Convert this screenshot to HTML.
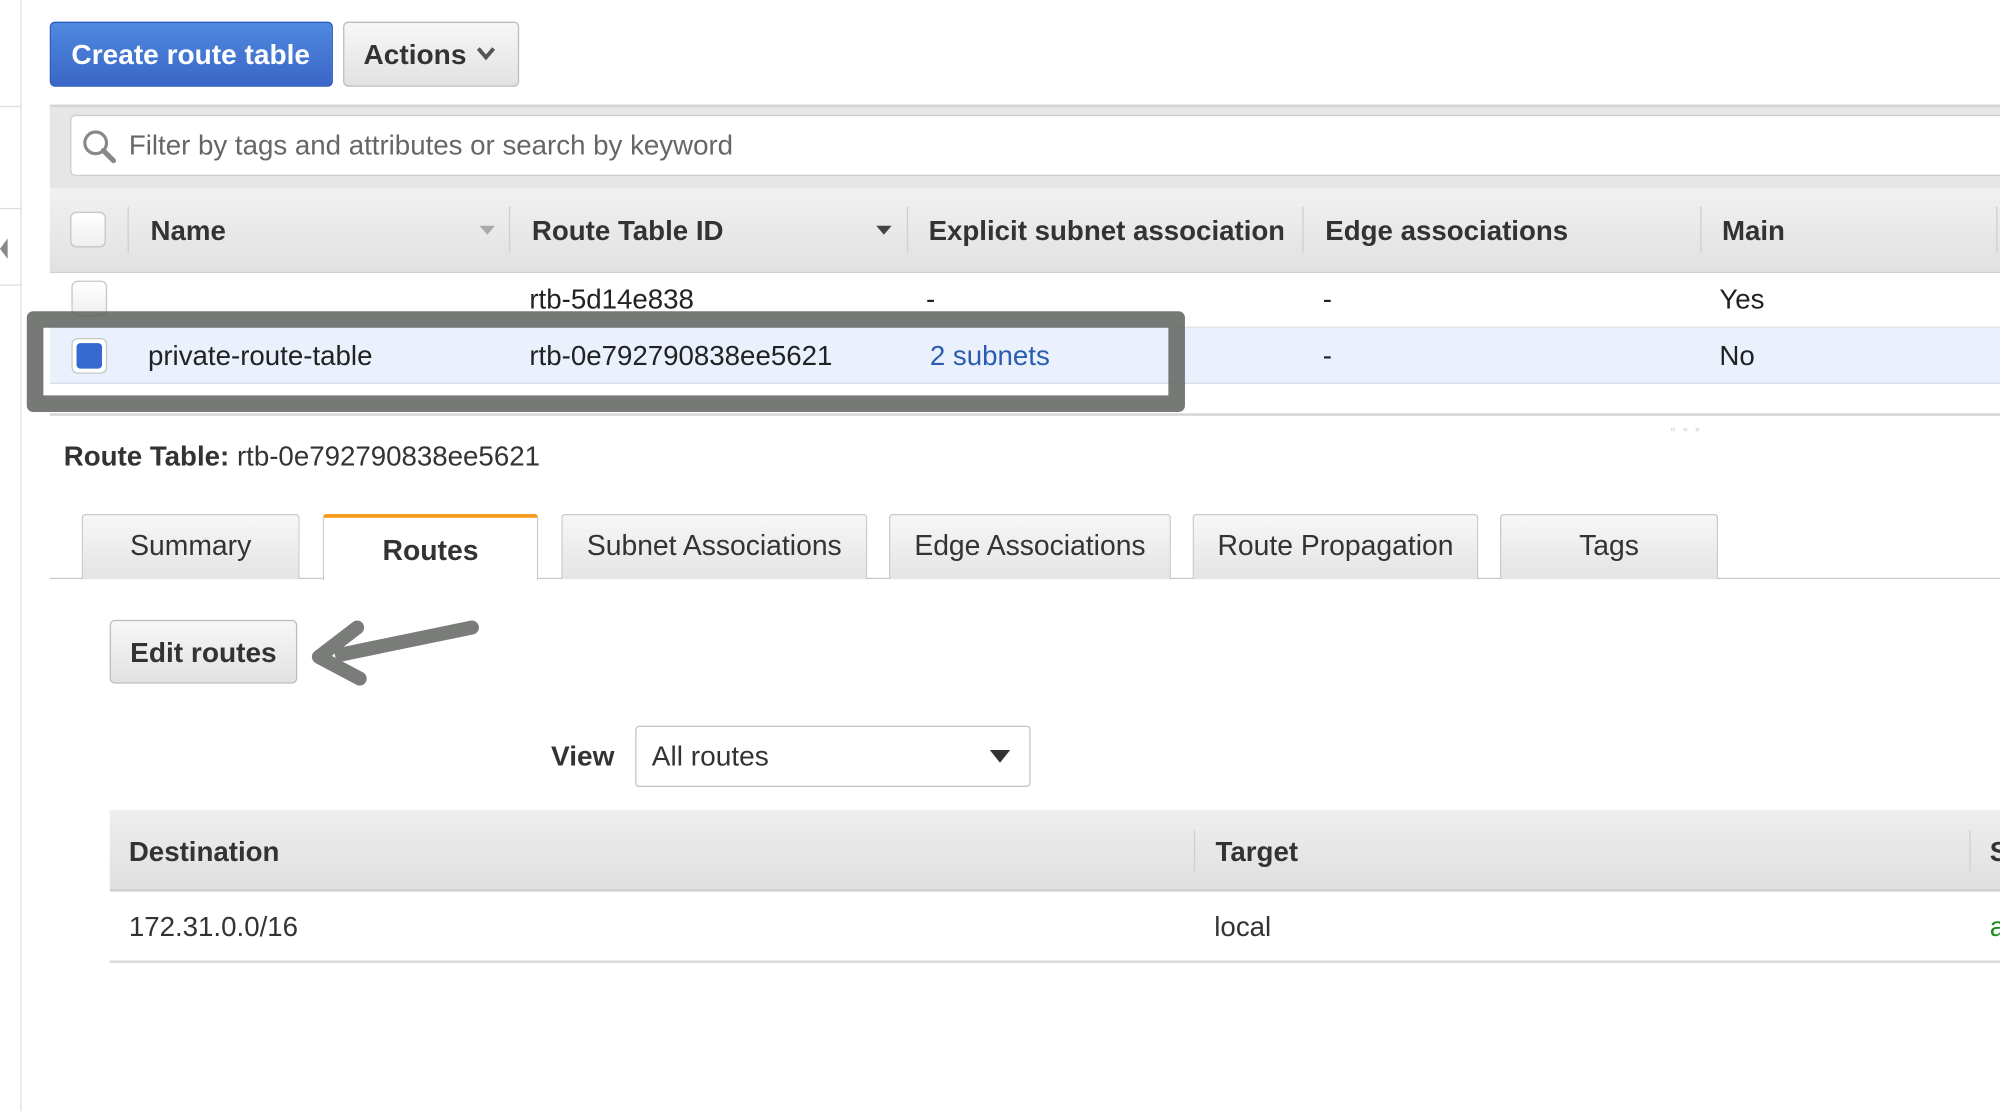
<!DOCTYPE html>
<html><head><meta charset="utf-8"><style>
html,body{margin:0;padding:0;background:#fff;width:2000px;height:1111px;overflow:hidden}
#s{position:absolute;left:0;top:0;width:1568px;height:871px;transform:scale(1.27551);transform-origin:0 0;font-family:"Liberation Sans",Arial,sans-serif;color:#222}
#s div{position:absolute;box-sizing:border-box}
.t{white-space:nowrap;font-size:21.7px;line-height:24px}
.b{font-weight:bold}
.btn{border:1px solid #bbb;border-radius:4px;background:linear-gradient(#f7f7f7,#e2e2e2)}
.cb{width:28px;height:28px;border:1px solid #c6c6c6;border-radius:5px;background:linear-gradient(#fff,#efefef)}
.sep{width:1px;background:#cfcfcf}
.tab{top:403px;height:51px;border:1px solid #c8c8c8;border-bottom:none;border-radius:3px 3px 0 0;background:linear-gradient(#f7f7f7,#e4e4e4);font-size:22.2px;color:#333;text-align:center;line-height:48px;white-space:nowrap}
</style></head><body><div id="s">
<div style="left:16px;top:0;width:1px;height:871px;background:#ddd"></div>
<div style="left:0;top:83px;width:16px;height:1px;background:#ddd"></div>
<div style="left:0;top:163px;width:16px;height:1px;background:#ddd"></div>
<div style="left:0;top:223px;width:16px;height:1px;background:#ddd"></div>
<div style="left:0;top:187px;width:0;height:0;border-top:8px solid transparent;border-bottom:8px solid transparent;border-right:6px solid #888"></div>

<div style="left:39px;top:17px;width:222px;height:51px;border:1px solid #2d5cbf;border-radius:4px;background:linear-gradient(#5089e0,#3a66c6)"></div>
<div class="t b" style="left:56px;top:31px;color:#fff;font-size:22px">Create route table</div>
<div class="btn" style="left:269px;top:17px;width:138px;height:51px"></div>
<div class="t b" style="left:285px;top:31px;color:#333;font-size:22px">Actions</div>
<svg style="position:absolute;left:373px;top:36px" width="16" height="12"><path d="M2 2 L8 9 L14 2" stroke="#555" stroke-width="3" fill="none"/></svg>

<div style="left:39px;top:82px;width:1529px;height:66px;background:#e6e6e6;border-top:2px solid #d4d4d4"></div>
<div style="left:55px;top:90px;width:1520px;height:48px;background:#fff;border:1px solid #ccc;border-radius:4px"></div>
<svg style="position:absolute;left:63px;top:100px" width="30" height="30"><circle cx="12" cy="12" r="8.5" stroke="#888" stroke-width="2.5" fill="none"/><path d="M18 18 L26 26" stroke="#888" stroke-width="4" stroke-linecap="round"/></svg>
<div class="t" style="left:101px;top:102px;color:#666">Filter by tags and attributes or search by keyword</div>

<div style="left:39px;top:148px;width:1529px;height:66px;background:linear-gradient(#f1f1f1,#e1e1e1);border-bottom:1px solid #cfcfcf"></div>
<div class="cb" style="left:55px;top:166px"></div>
<div class="sep" style="left:100px;top:162px;height:36px"></div>
<div class="sep" style="left:399px;top:162px;height:36px"></div>
<div class="sep" style="left:711px;top:162px;height:36px"></div>
<div class="sep" style="left:1021px;top:162px;height:36px"></div>
<div class="sep" style="left:1333px;top:162px;height:36px"></div>
<div class="sep" style="left:1565px;top:162px;height:36px"></div>
<div class="t b" style="left:118px;top:169px;color:#333">Name</div>
<div class="t b" style="left:417px;top:169px;color:#333">Route Table ID</div>
<div class="t b" style="left:728px;top:169px;color:#333;width:278px;overflow:hidden">Explicit subnet association</div>
<div class="t b" style="left:1039px;top:169px;color:#333">Edge associations</div>
<div class="t b" style="left:1350px;top:169px;color:#333">Main</div>
<div style="left:376px;top:177px;border-left:6px solid transparent;border-right:6px solid transparent;border-top:7px solid #aaa"></div>
<div style="left:687px;top:177px;border-left:6px solid transparent;border-right:6px solid transparent;border-top:7px solid #444"></div>

<div style="left:39px;top:256px;width:1529px;height:1px;background:#ddd"></div>
<div class="cb" style="left:56px;top:220px"></div>
<div class="t" style="left:415px;top:223px">rtb-5d14e838</div>
<div class="t" style="left:726px;top:223px">-</div>
<div class="t" style="left:1037px;top:223px">-</div>
<div class="t" style="left:1348px;top:223px">Yes</div>

<div style="left:39px;top:257px;width:1529px;height:44px;background:#eaf1fd;border-bottom:1px solid #d8dde6"></div>
<div class="cb" style="left:56px;top:265px;background:#fff"></div>
<div style="left:60px;top:269px;width:20px;height:20px;border-radius:3px;background:#3769d1"></div>
<div class="t" style="left:116px;top:267px">private-route-table</div>
<div class="t" style="left:415px;top:267px">rtb-0e792790838ee5621</div>
<div class="t" style="left:729px;top:267px;color:#2a5db0">2 subnets</div>
<div class="t" style="left:1037px;top:267px">-</div>
<div class="t" style="left:1348px;top:267px">No</div>

<div style="left:21px;top:244px;width:908px;height:79px;border:13px solid rgba(100,102,100,0.88);border-radius:5px"></div>

<div style="left:39px;top:324px;width:1529px;height:2px;background:#d6d6d6"></div>
<div class="t" style="left:1310px;top:326px;font-size:10px;color:#bbb;letter-spacing:6px">▫▫▫</div>

<div class="t" style="left:50px;top:346px;color:#333"><b>Route Table:</b> rtb-0e792790838ee5621</div>

<div style="left:39px;top:453px;width:1529px;height:1px;background:#c8c8c8"></div>
<div class="tab" style="left:64px;width:171px">Summary</div>
<div class="tab" style="left:253px;width:169px;height:52px;background:#fff;border-top:3px solid #f59a1b;font-weight:bold;line-height:52px">Routes</div>
<div class="tab" style="left:440px;width:240px">Subnet Associations</div>
<div class="tab" style="left:697px;width:221px">Edge Associations</div>
<div class="tab" style="left:935px;width:224px">Route Propagation</div>
<div class="tab" style="left:1176px;width:171px">Tags</div>

<div class="btn" style="left:86px;top:486px;width:147px;height:50px"></div>
<div class="t b" style="left:102px;top:500px;color:#333;font-size:22px">Edit routes</div>
<svg style="position:absolute;left:240px;top:480px" width="140" height="60"><path d="M130 12 L28 33" stroke="#7a7c7a" stroke-width="11" stroke-linecap="round"/><path d="M40 12 L10 35 L42 52" stroke="#7a7c7a" stroke-width="11" fill="none" stroke-linecap="round" stroke-linejoin="round"/></svg>

<div class="t b" style="left:432px;top:581px;color:#333;font-size:22px">View</div>
<div style="left:498px;top:569px;width:310px;height:48px;border:1px solid #c4c4c4;border-radius:3px;background:#fff"></div>
<div class="t" style="left:511px;top:581px;color:#333;font-size:22px">All routes</div>
<div style="left:776px;top:588px;border-left:8px solid transparent;border-right:8px solid transparent;border-top:10px solid #333"></div>

<div style="left:86px;top:635px;width:1482px;height:64px;background:linear-gradient(#eeeeee,#e0e0e0);border-bottom:2px solid #d0d0d0"></div>
<div class="sep" style="left:936px;top:651px;height:32px"></div>
<div class="sep" style="left:1544px;top:651px;height:32px"></div>
<div class="t b" style="left:101px;top:656px;color:#333">Destination</div>
<div class="t b" style="left:953px;top:656px;color:#333">Target</div>
<div class="t b" style="left:1560px;top:656px;color:#333">S</div>
<div class="t" style="left:101px;top:715px;color:#333">172.31.0.0/16</div>
<div class="t" style="left:952px;top:715px;color:#333">local</div>
<div class="t" style="left:1560px;top:715px;color:#1d8a1d">a</div>
<div style="left:86px;top:753px;width:1482px;height:2px;background:#dcdcdc"></div>
</div></body></html>
